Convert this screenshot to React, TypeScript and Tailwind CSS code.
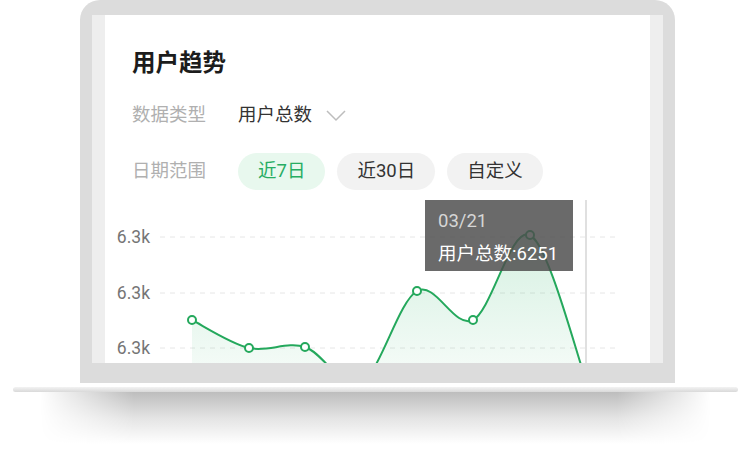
import React from "react";

type Pt = [number, number];

const pts: Pt[] = [
  [87, 120],
  [144, 148],
  [200, 147],
  [256, 183],
  [312, 91],
  [368, 120],
  [425, 35],
  [481, 180],
];

function spline(p: Pt[]): string {
  let d = `M${p[0][0]},${p[0][1]}`;
  for (let i = 0; i < p.length - 1; i++) {
    const p0 = p[i - 1] || p[i];
    const p1 = p[i];
    const p2 = p[i + 1];
    const p3 = p[i + 2] || p2;
    const c1x = p1[0] + (p2[0] - p0[0]) / 6;
    const c1y = p1[1] + (p2[1] - p0[1]) / 6;
    const c2x = p2[0] - (p3[0] - p1[0]) / 6;
    const c2y = p2[1] - (p3[1] - p1[1]) / 6;
    d += ` C${c1x.toFixed(1)},${c1y.toFixed(1)} ${c2x.toFixed(1)},${c2y.toFixed(1)} ${p2[0]},${p2[1]}`;
  }
  return d;
}

function Chart() {
  const line = spline(pts);
  const area = `${line} L${pts[pts.length - 1][0]},230 L${pts[0][0]},230 Z`;
  const grid = [37, 93, 148];
  return (
    <div className="relative mt-[10px] h-[230px] w-full shrink-0">
      <svg width="545" height="230" className="block">
        <defs>
          <linearGradient id="fillg" x1="0" y1="0" x2="0" y2="1">
            <stop offset="0%" stopColor="#2fb56a" stopOpacity="0.2" />
            <stop offset="70%" stopColor="#2fb56a" stopOpacity="0.05" />
            <stop offset="100%" stopColor="#2fb56a" stopOpacity="0.02" />
          </linearGradient>
        </defs>
        {grid.map((y) => (
          <g key={y}>
            <line x1="55" x2="512" y1={y} y2={y} stroke="#e6e6e6" strokeWidth="1" strokeDasharray="5 5" />
            <text
              x="45"
              y={y + 6}
              textAnchor="end"
              fontSize="17.5"
              fill="#757575"
              fontFamily="Roboto, 'Noto Sans CJK SC', sans-serif"
            >
              6.3k
            </text>
          </g>
        ))}
        <path d={area} fill="url(#fillg)" />
        <line x1="481" x2="481" y1="0" y2="230" stroke="#e0e0e0" strokeWidth="2" />
        <path d={line} fill="none" stroke="#24a85c" strokeWidth="2" />
        {pts.map(([x, y], i) => (
          <circle key={i} cx={x} cy={y} r="4" fill="#ffffff" stroke="#24a85c" strokeWidth="2" />
        ))}
      </svg>
      <div className="absolute left-[320px] top-0 flex h-[71px] w-[148px] flex-col bg-[rgba(78,78,78,0.84)] pl-[13px]">
        <div className="mt-[9px] h-[24px] text-[18.5px] leading-[24px] text-[#d6d6d6]">03/21</div>
        <div className="mt-[9px] h-[24px] text-[18.5px] leading-[24px] text-white">用户总数:6251</div>
      </div>
    </div>
  );
}

function Pill({ label, active }: { label: string; active?: boolean }) {
  return (
    <div
      className={
        active
          ? "flex h-[37px] items-center rounded-full bg-[#e8f8ee] px-[20px] text-[18.5px] text-[#27ad63]"
          : "flex h-[37px] items-center rounded-full bg-[#f2f2f2] px-[20px] text-[18.5px] text-[#333333]"
      }
    >
      {label}
    </div>
  );
}

export default function App() {
  return (
    <div className="relative h-[462px] w-[751px] overflow-hidden bg-white font-['Roboto','Noto_Sans_CJK_SC',sans-serif]">
      <div className="ml-[80px] flex h-[383px] w-[595px] flex-col rounded-t-[20px] bg-[#dcdcdc] pb-[20px] pl-[12px] pr-[12px] pt-[15px]">
        <div className="flex h-[348px] shrink-0 overflow-hidden border-x-[13px] border-x-[#eeeeee] bg-white">
          <div className="flex w-full flex-col">
            <div className="ml-[27px] mt-[32px] h-[32px] shrink-0 text-[23.5px] font-bold leading-[32px] text-[#1c1c1c]">
              用户趋势
            </div>
            <div className="ml-[27px] mt-[18px] flex h-[37px] shrink-0 items-center">
              <div className="w-[106px] text-[18.5px] text-[#b0b0b0]">数据类型</div>
              <div className="text-[18.5px] text-[#333333]">用户总数</div>
              <svg width="20" height="12" viewBox="0 0 20 12" className="ml-[14px]">
                <polyline points="1,1 10,10 19,1" fill="none" stroke="#bdbdbd" strokeWidth="1.5" />
              </svg>
            </div>
            <div className="ml-[27px] mt-[19px] flex h-[37px] shrink-0 items-center">
              <div className="w-[106px] text-[18.5px] text-[#b0b0b0]">日期范围</div>
              <div className="flex gap-[12px]">
                <Pill label="近7日" active />
                <Pill label="近30日" />
                <Pill label="自定义" />
              </div>
            </div>
            <Chart />
          </div>
        </div>
      </div>
      <div className="mx-[13px] mt-[4px] h-[5px] rounded-full bg-gradient-to-b from-[#f3f3f3] to-[#d9d9d9]" />
      <div className="mx-[40px] h-[52px] bg-gradient-to-b from-[#bdbdbd] via-[#e4e4e4] to-white [mask-image:linear-gradient(to_right,transparent,black_14%,black_86%,transparent)]" />
    </div>
  );
}
